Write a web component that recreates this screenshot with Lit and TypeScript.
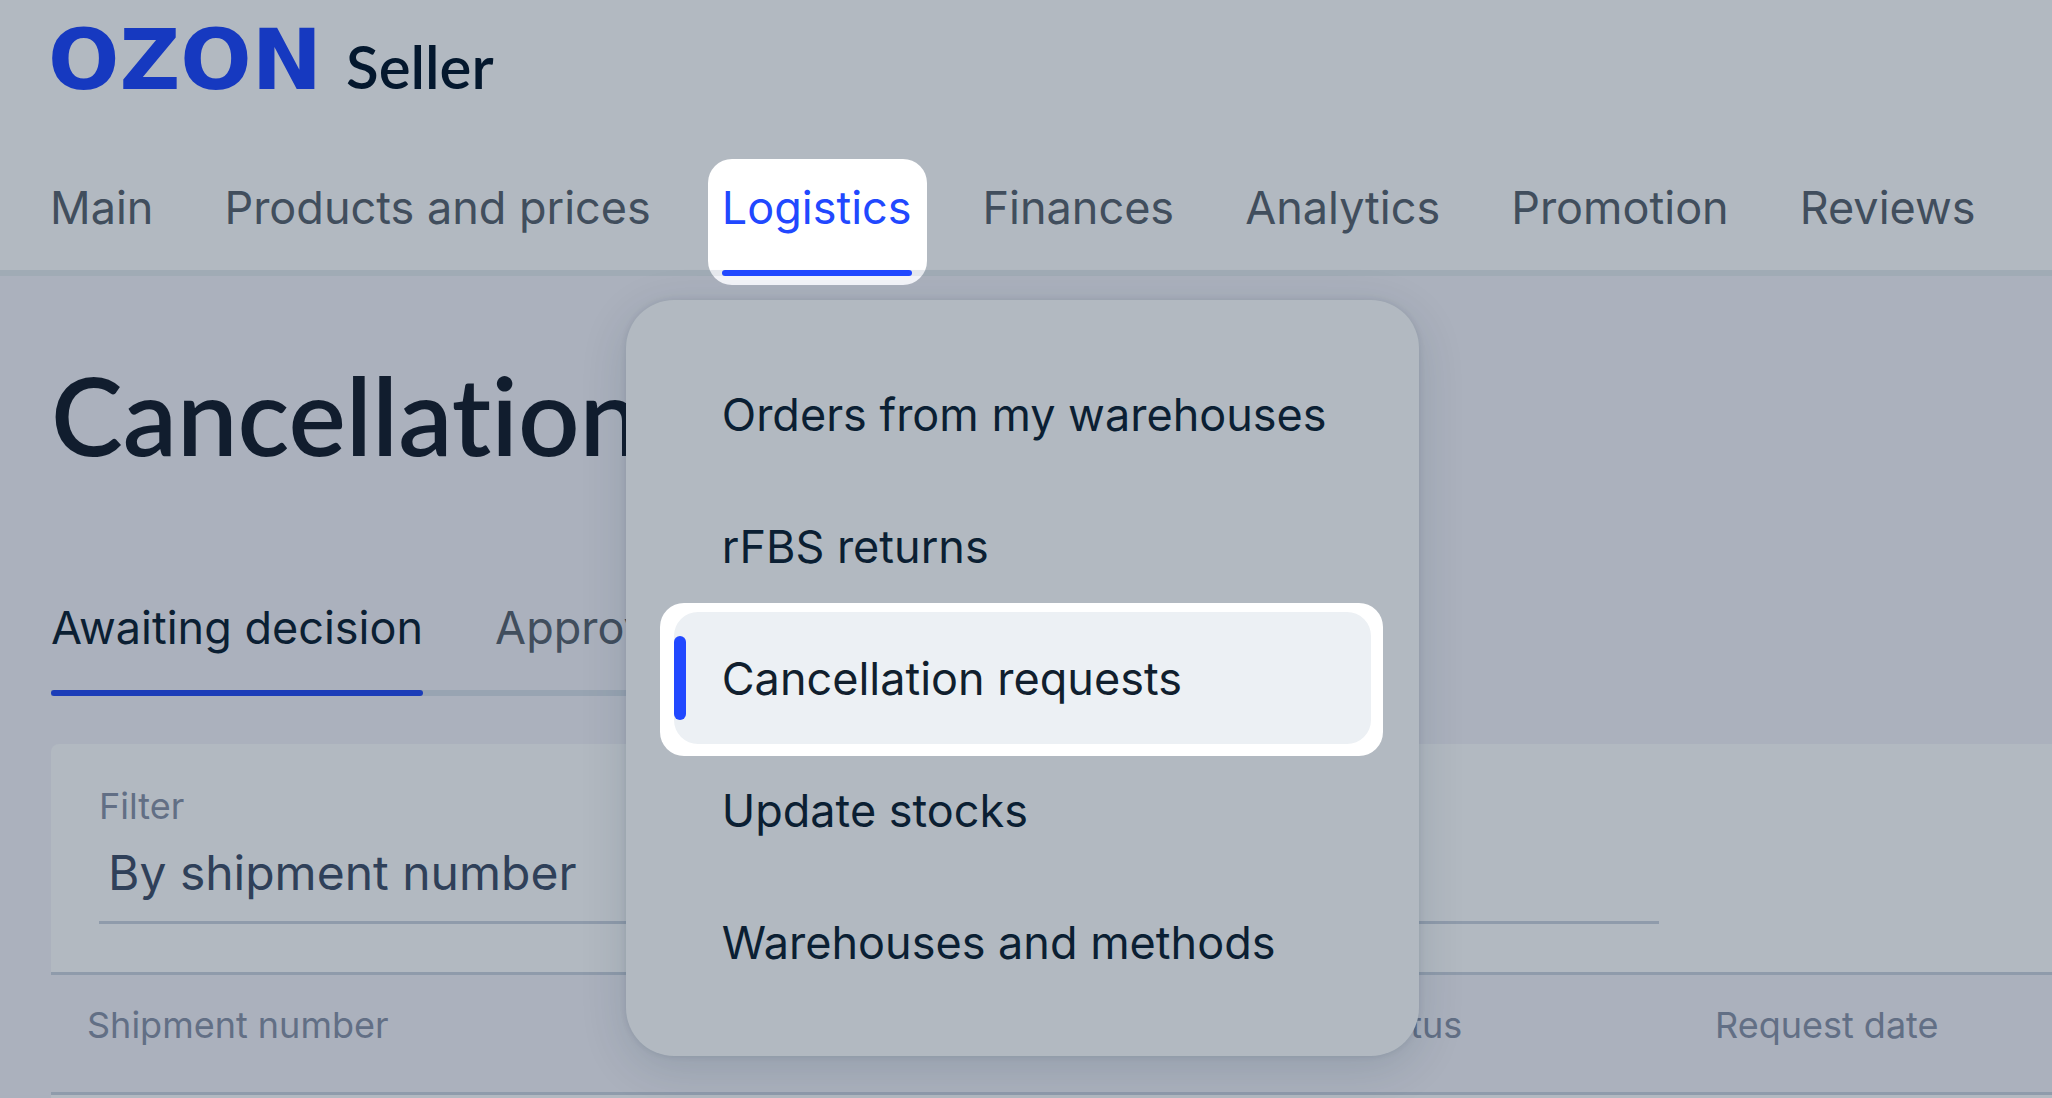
import { LitElement, css, html } from "lit";
import { customElement } from "lit/decorators.js";
import { classMap } from "lit/directives/class-map.js";

const SECTIONS = ["Main", "Products and prices", "Logistics", "Finances", "Analytics", "Promotion", "Reviews"];
const LOGISTICS = ["Orders from my warehouses", "rFBS returns", "Cancellation requests", "Update stocks", "Warehouses and methods"];

@customElement("logistics-menu")
export class LogisticsMenu extends LitElement {
  static styles = css`
    :host {
      display: block;
    }
    .menu {
      margin: 0;
      padding: 48px;
      list-style: none;
      border-radius: 48px;
      background: #b2b9c1;
      box-shadow: 0 12px 48px rgba(0, 42, 62, 0.14), 0 0 6px rgba(0, 26, 52, 0.1);
    }
    .item {
      position: relative;
      isolation: isolate;
    }
    .link {
      display: block;
      padding: 37px 44px 35px 48px;
      border-radius: 24px;
      color: #0b1f33;
      line-height: 60px;
      text-decoration: none;
      white-space: nowrap;
    }
    .current .link {
      background: #ecf0f4;
      color: #111f2e;
    }
    .current::before {
      content: "";
      position: absolute;
      z-index: -1;
      inset: -9px -12px -12px -14px;
      border-radius: 24px;
      background: #fff;
    }
    .current::after {
      content: "";
      position: absolute;
      inset: 24px auto 24px 0;
      width: 12px;
      border-radius: 6px;
      background: #2148ff;
    }
  `;

  render() {
    return html`
      <ul class="menu">
        ${LOGISTICS.map(
          (name) => html`
            <li class=${classMap({ item: true, current: name === "Cancellation requests" })}>
              <a class="link" href="#">${name}</a>
            </li>
          `
        )}
      </ul>
    `;
  }
}

@customElement("seller-header")
export class SellerHeader extends LitElement {
  static styles = css`
    :host {
      display: block;
      padding: 12px 48px 0;
      border-bottom: 6px solid #a0abb5;
      background: #b2b9c1;
    }
    .brand {
      display: flex;
      align-items: baseline;
      gap: 24px;
      text-decoration: none;
    }
    .ozon {
      color: #1639c0;
      font: 700 84px/96px "DejaVu Sans", sans-serif;
    }
    .seller {
      color: #04182e;
      font: 600 60px/72px Lato, sans-serif;
    }
    .sections {
      display: flex;
      gap: 71px;
      margin: 70px 0 0;
      padding: 0 2px;
      list-style: none;
    }
    .section {
      position: relative;
      z-index: 1;
    }
    .link {
      display: block;
      padding-bottom: 32px;
      color: #414e5d;
      line-height: 60px;
      text-decoration: none;
      white-space: nowrap;
    }
    .open {
      isolation: isolate;
    }
    .open .link {
      color: #2148ff;
    }
    .open::before {
      content: "";
      position: absolute;
      z-index: -1;
      inset: -19px -15px -15px -14px;
      border-radius: 24px;
      background: linear-gradient(to top, #f4f5fa 9px, #e6e9ee 9px 15px, #fff 15px);
    }
    .open::after {
      content: "";
      position: absolute;
      inset: auto 0 -6px 0;
      height: 6px;
      border-radius: 3px;
      background: #2148ff;
    }
    .dropdown {
      position: absolute;
      top: calc(100% + 30px);
      left: -96px;
    }
  `;

  render() {
    return html`
      <a class="brand" href="#">
        <span class="ozon">OZON</span>
        <span class="seller">Seller</span>
      </a>
      <nav>
        <ul class="sections">
          ${SECTIONS.map((name) => {
            const open = name === "Logistics";
            return html`
              <li class=${classMap({ section: true, open })}>
                <a class="link" href="#">${name}</a>
                ${open ? html`<logistics-menu class="dropdown"></logistics-menu>` : null}
              </li>
            `;
          })}
        </ul>
      </nav>
    `;
  }
}

@customElement("app-root")
export class AppRoot extends LitElement {
  static styles = css`
    :host {
      display: flex;
      flex-direction: column;
      min-height: 100vh;
      overflow: hidden;
      background: #abb1bd;
      font: 400 45px/60px Inter, sans-serif;
    }
    .header {
      position: relative;
      z-index: 1;
    }
    .page {
      display: flex;
      flex: 1;
      flex-direction: column;
      padding: 78px 0 0 51px;
    }
    .title {
      margin: 0;
      color: #111d2e;
      font: 600 108px/120px Lato, sans-serif;
      font-variant-ligatures: none;
    }
    .tabs {
      display: flex;
      align-self: flex-start;
      gap: 72px;
      margin: 124px 0 48px;
      box-shadow: inset 0 -6px #98a4b2;
    }
    .tab {
      padding: 0 0 32px;
      border: 0;
      border-bottom: 6px solid transparent;
      background: none;
      color: #414e5d;
      font: inherit;
    }
    .selected {
      position: relative;
      color: #0b1f33;
    }
    .selected::after {
      content: "";
      position: absolute;
      inset: auto 0 -6px 0;
      height: 6px;
      border-radius: 3px;
      background: #1c3db8;
    }
    .filter {
      display: flex;
      flex-direction: column;
      padding: 38px 48px 48px;
      border-bottom: 3px solid #8f9bab;
      border-radius: 8px 0 0 0;
      background: #b2b9c1;
    }
    .label {
      color: #626f85;
      font-size: 36px;
      line-height: 48px;
    }
    .select {
      box-sizing: border-box;
      width: 100%;
      max-width: 1560px;
      height: 94px;
      padding: 0 0 6px 9px;
      appearance: none;
      border: 0;
      border-bottom: 3px solid #8f9bab;
      border-radius: 0;
      background: none;
      color: #2f4059;
      font: 400 48px/60px Inter, sans-serif;
    }
    .requests {
      flex: 1;
      min-height: 120px;
      background: #b2b9c1;
    }
    .table {
      width: 100%;
      table-layout: fixed;
      border-collapse: separate;
      border-spacing: 0;
      background: #abb1bd;
    }
    .cell {
      padding: 26px 0 43px 36px;
      border-bottom: 3px solid #8f9bab;
      color: #626f85;
      font-size: 36px;
      font-weight: 400;
      line-height: 48px;
      text-align: left;
      white-space: nowrap;
    }
    .number {
      width: 1232px;
    }
    .status {
      width: 324px;
    }
  `;

  render() {
    return html`
      <seller-header class="header"></seller-header>
      <main class="page">
        <h1 class="title">Cancellations</h1>
        <div class="tabs" role="tablist">
          <button class="tab selected" role="tab" aria-selected="true">Awaiting decision</button>
          <button class="tab" role="tab" aria-selected="false">Approved</button>
        </div>
        <div class="filter">
          <label class="label" for="filter">Filter</label>
          <select class="select" id="filter">
            <option>By shipment number</option>
          </select>
        </div>
        <div class="requests">
          <table class="table">
            <thead>
              <tr>
                <th class="cell number" scope="col">Shipment number</th>
                <th class="cell status" scope="col">Status</th>
                <th class="cell" scope="col">Request date</th>
              </tr>
            </thead>
          </table>
        </div>
      </main>
    `;
  }
}
